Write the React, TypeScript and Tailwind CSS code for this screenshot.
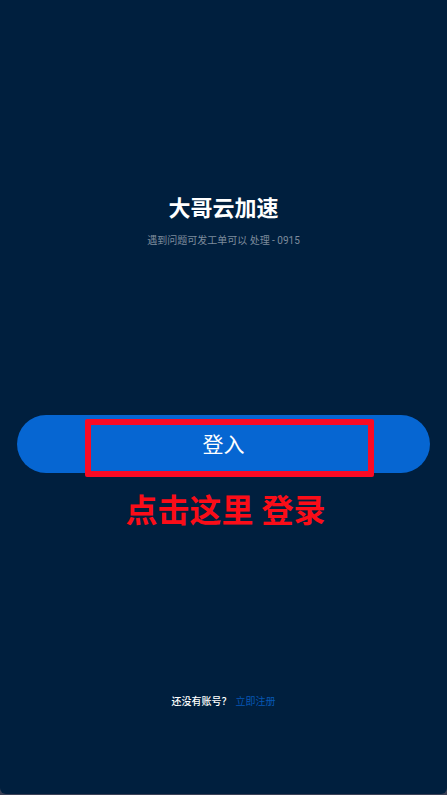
const FONT = "font-[Roboto,'Noto_Sans_CJK_SC',sans-serif]";

export default function App() {
  return (
    <div className={`flex min-h-screen flex-col bg-[#3a4056] pb-px ${FONT}`}>
      <main className="flex grow flex-col rounded-b-md bg-[#001f3e] px-4 text-center">
        {/* TITLE */}
        <header className="flex flex-col gap-2 pt-48">
          <h1 className="text-[22px] leading-[33px] font-bold text-white">大哥云加速</h1>
          <p className="text-[10px] leading-4 text-[#7d8b9c]">
            遇到问题可发工单可以 处理 - 0915
          </p>
        </header>

        {/* LOGIN */}
        <section className="mt-[166px]">
          <div className="relative mx-px">
            <button
              type="button"
              className="block h-[58px] w-full rounded-full bg-[#0666d2] pt-0.5 text-[21px] leading-none text-white"
            >
              登入
            </button>
            <div className="pointer-events-none absolute top-1 right-14 -bottom-1 left-17 rounded-xs border-6 border-[#fb0a24]" />
          </div>
          <p className="mt-4 ml-1 text-[32px] leading-[45px] font-bold text-[#fb0d18]">
            点击这里 登录
          </p>
        </section>

        {/* REGISTER */}
        <footer className="mt-auto flex justify-center gap-1 pb-21 text-[10px] leading-4">
          <span className="font-medium text-white">还没有账号？</span>
          <a href="#register" className="text-[#0757b4]">
            立即注册
          </a>
        </footer>
      </main>
    </div>
  );
}
